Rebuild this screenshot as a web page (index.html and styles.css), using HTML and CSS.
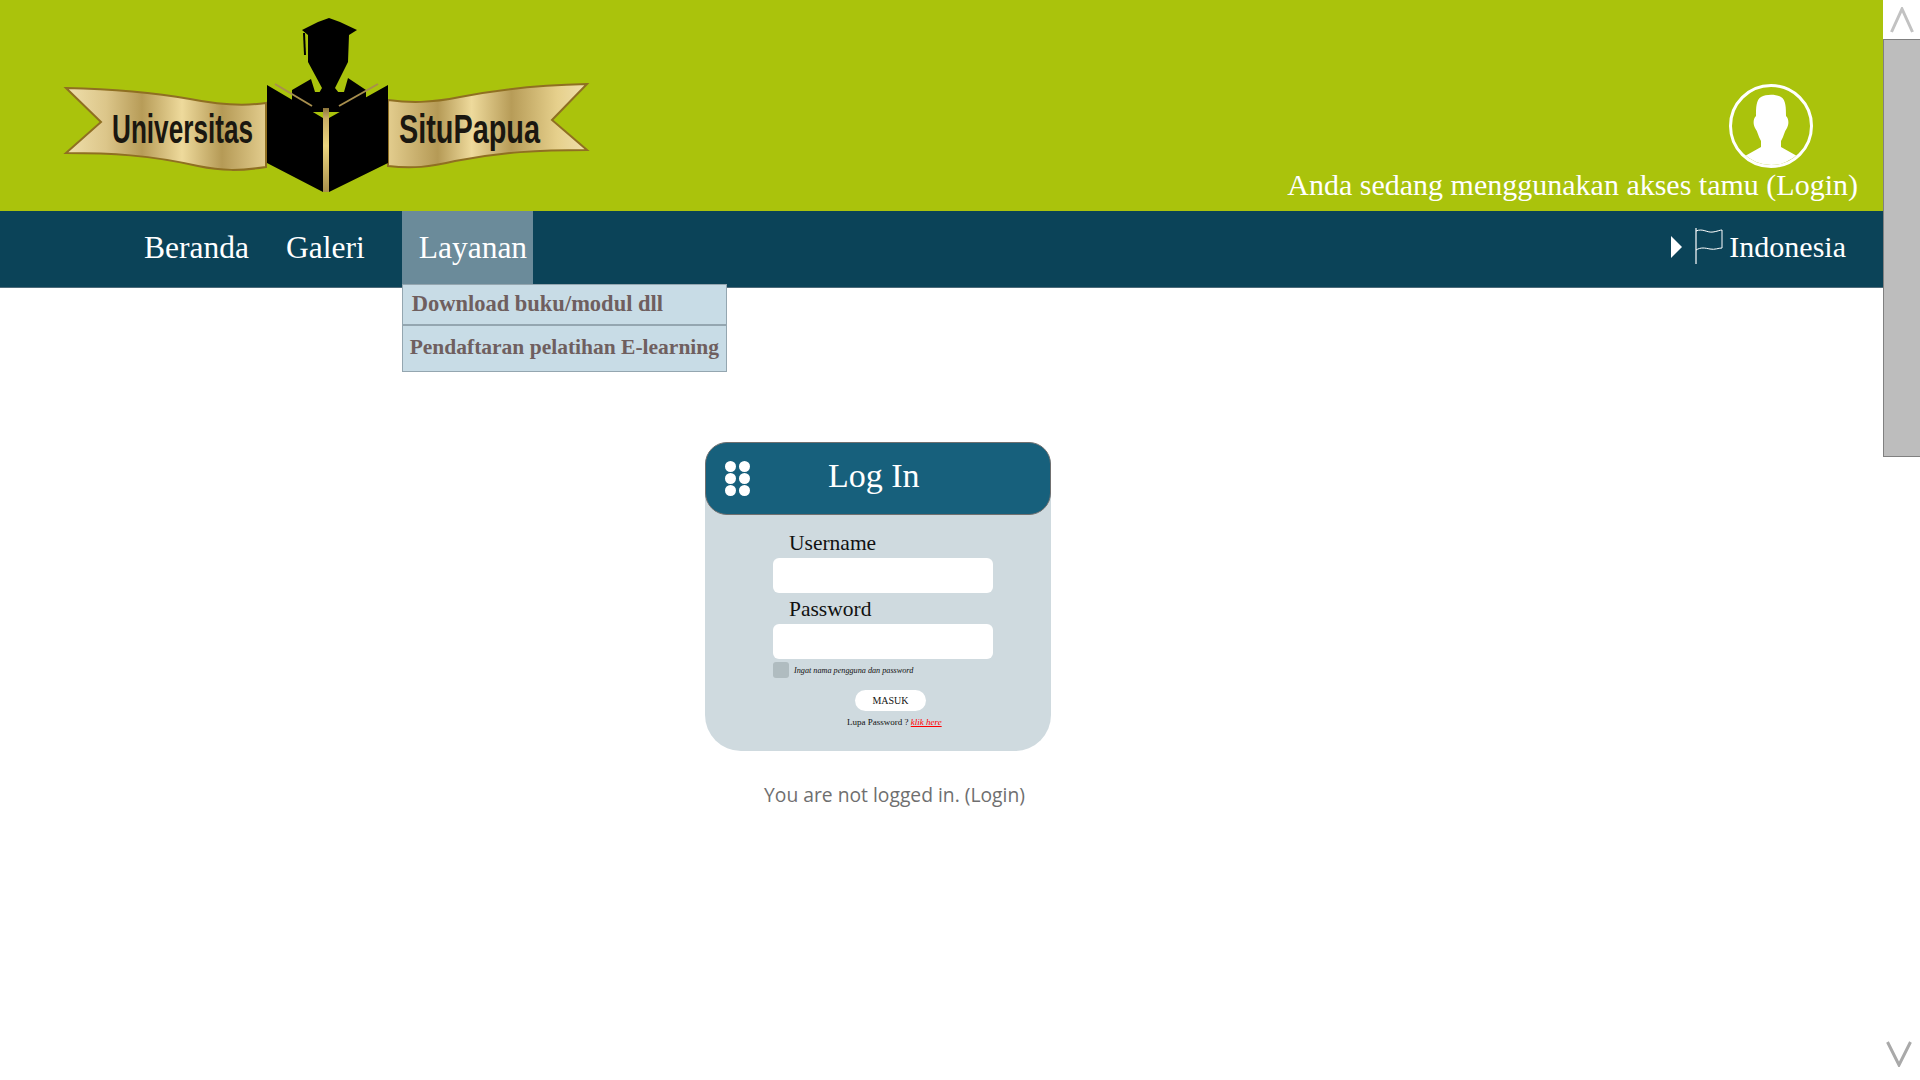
FILE: index.html
```html
<!DOCTYPE html>
<html lang="id">
<head>
  <meta charset="UTF-8">
  <meta name="viewport" content="width=device-width, initial-scale=1.0">
  <title>Universitas Situ Papua</title>
  <link rel="stylesheet" href="styles.css">
</head>
<body>
  <div id="halaman">
    <div id="utama">
      <div id="topo">
        <svg class="logo" width="600" height="200" viewBox="0 0 600 200">
          <defs>
            <linearGradient id="emas" x1="0" y1="0" x2="1" y2="0">
              <stop offset="0" stop-color="#f0e0ac"/>
              <stop offset="0.2" stop-color="#dcc68a"/>
              <stop offset="0.38" stop-color="#b79c58"/>
              <stop offset="0.58" stop-color="#eeda9c"/>
              <stop offset="0.78" stop-color="#b59a56"/>
              <stop offset="1" stop-color="#e3cd8e"/>
            </linearGradient>
            <linearGradient id="emas2" x1="0" y1="0" x2="1" y2="0">
              <stop offset="0" stop-color="#e3cd8e"/>
              <stop offset="0.25" stop-color="#b59a56"/>
              <stop offset="0.42" stop-color="#eeda9c"/>
              <stop offset="0.62" stop-color="#b79c58"/>
              <stop offset="0.85" stop-color="#e6d08c"/>
              <stop offset="1" stop-color="#f0e0ac"/>
            </linearGradient>
            <linearGradient id="garis" x1="0" y1="0" x2="0" y2="1">
              <stop offset="0" stop-color="#8a733a"/>
              <stop offset="0.12" stop-color="#c9ad64"/>
              <stop offset="0.45" stop-color="#ecd57e"/>
              <stop offset="1" stop-color="#a98f4c"/>
            </linearGradient>
          </defs>
          <!-- pita kiri -->
          <path d="M66 88 C110 89 150 92 190 99 C220 105 245 106 266 103 L266 167 C240 171 222 171 198 166 C150 155 110 153 66 153 L101 122 Z" fill="url(#emas)" stroke="#8f6f22" stroke-width="2"/>
          <!-- pita kanan -->
          <path d="M587 84 C540 85 500 89 460 97 C430 103 410 103 388 100 L388 166 C412 169 430 167 455 161 C500 152 540 150 587 150 L552 120 Z" fill="url(#emas2)" stroke="#8f6f22" stroke-width="2"/>
          <text class="logo-teks" transform="translate(112 143) scale(0.6 1)" textLength="235" lengthAdjust="spacingAndGlyphs">Universitas</text>
          <text class="logo-teks" transform="translate(399 143) scale(0.6 1)" textLength="235" lengthAdjust="spacingAndGlyphs">SituPapua</text>
          <!-- orang -->
          <path d="M329 18 L340 22 L357 30 L349 35 L348 62 L335 88 L339 93 L319 93 L322 88 L308 62 L308 35 L302 30 L318 22 Z" fill="#000"/>
          <path d="M303 33 L304 55 L306 55 L305 33 Z" fill="#000"/>
          <path d="M292 90 L311 79 L315 92 L344 92 L348 78 L366 90 L366 112 L292 112 Z" fill="#000"/>
          <!-- buku -->
          <path d="M267 85 L323 118 L329 118 L388 85 L388 163 L329 192 L323 192 L267 163 Z" fill="#000"/>
          <path d="M275 84 L312 106" stroke="#a88f4e" stroke-width="2"/>
          <path d="M378 84 L339 106" stroke="#a88f4e" stroke-width="2"/>
          <rect x="323" y="108" width="6" height="84" fill="url(#garis)"/>
        </svg>
        <div class="akun">
          <svg class="avatar" width="84" height="84" viewBox="0 0 84 84">
            <defs>
              <clipPath id="lingkar"><circle cx="42" cy="42" r="39"/></clipPath>
            </defs>
            <circle cx="42" cy="42" r="40.5" fill="none" stroke="#fff" stroke-width="3"/>
            <g clip-path="url(#lingkar)" fill="#fff">
              <path d="M32 13 C37 10 47 10 52 13 C57 16 57 24 57 32 C60 35 60 40 58 44 C55 48 55 52 52 57 L52 63 L68 72 L68 84 L16 84 L16 72 L32 63 L32 57 C29 52 29 48 26 44 C24 40 24 35 27 32 C27 24 27 16 32 13 Z"/>
            </g>
          </svg>
          <div class="akses">Anda sedang menggunakan akses tamu (Login)</div>
        </div>
      </div>

      <div id="menu">
        <div class="menu-kiri">
          <a class="menu-item">Beranda</a>
          <a class="menu-item">Galeri</a>
          <div class="menu-item aktif">
            Layanan
            <div class="dropdown">
              <a class="dd-item">Download buku/modul dll</a>
              <a class="dd-item">Pendaftaran pelatihan E-learning</a>
            </div>
          </div>
        </div>
        <div class="bahasa">
          <span class="segitiga"></span>
          <svg class="bendera" width="28" height="36" viewBox="0 0 28 36">
            <path d="M1 0 V36" stroke="#fff" stroke-width="1.2" fill="none"/>
            <path d="M1 3 C8 0 12 5 18 4 C22 3.500 25 2 27 2 V20 C23 20 20 22 15 21 C10 20 6 19 1 22" stroke="#fff" stroke-width="1" fill="none"/>
          </svg>
          <span>Indonesia</span>
        </div>
      </div>

      <div id="konten">
        <div class="kartu">
          <div class="kartu-atas">
            <div class="titik">
              <span></span><span></span>
              <span></span><span></span>
              <span></span><span></span>
            </div>
            <h1>Log In</h1>
          </div>
          <form class="form">
            <label class="label">Username</label>
            <input class="isian" type="text">
            <label class="label">Password</label>
            <input class="isian" type="password">
            <div class="ingat">
              <span class="cek"></span>
              <span>Ingat nama pengguna dan password</span>
            </div>
            <button class="masuk" type="button">MASUK</button>
            <div class="lupa">Lupa Password ? <a class="klik">klik here</a></div>
          </form>
        </div>
        <p class="pesan">You are not logged in. (Login)</p>
      </div>
    </div>

    <div id="gulir">
      <div class="gulir-atas">
        <svg width="24" height="26" viewBox="0 0 24 26"><path d="M1.500 25 L12 2 L22.500 25" fill="none" stroke="#c2c2c2" stroke-width="3"/></svg>
      </div>
      <div class="gulir-jempol"></div>
      <div class="gulir-bawah">
        <svg width="26" height="26" viewBox="0 0 26 26"><path d="M1.500 1 L13 24 L24.500 1" fill="none" stroke="#a9a9a9" stroke-width="3"/></svg>
      </div>
    </div>
  </div>
</body>
</html>
```

FILE: styles.css
```css
body {
  font-family: "Liberation Serif", "Times New Roman", serif;
  background-color: #fff;
  margin: 0;
  padding: 0;
  height: 100vh;
  overflow: hidden;
}

#halaman {
  display: flex;
  height: 100%;
}

#utama {
  flex-grow: 1;
  display: flex;
  flex-direction: column;
  min-width: 0;
}

/* bagian atas */
#topo {
  height: 211px;
  flex-shrink: 0;
  background-color: #aac30c;
  display: flex;
  justify-content: space-between;
  overflow: hidden;
}

.logo {
  display: block;
  flex-shrink: 0;
}

.logo-teks {
  font-family: "Liberation Sans", Arial, sans-serif;
  font-size: 40px;
  font-weight: bold;
  fill: #1a1710;
}

.akun {
  display: flex;
  flex-direction: column;
  align-items: flex-end;
  padding: 84px 25px 0 0;
}

.avatar {
  display: block;
  margin-right: 45px;
}

.akses {
  color: #fff;
  font-size: 30px;
  line-height: 34px;
  white-space: nowrap;
}

/* menu */
#menu {
  height: 76px;
  flex-shrink: 0;
  background-color: #0b4358;
  border-bottom: 1px solid #4e6b7a;
  display: flex;
  justify-content: space-between;
  color: #fff;
  font-size: 31.5px;
}

.menu-kiri {
  display: flex;
  padding-left: 144px;
  height: 73px;
}

.menu-item {
  display: flex;
  align-items: center;
  height: 73px;
  margin-right: 37px;
  position: relative;
}

.menu-item.aktif {
  background-color: #6b8b9a;
  padding: 0 6px 0 17px;
  margin-right: 0;
}

.dropdown {
  position: absolute;
  top: 73px;
  left: 0;
  width: 323px;
  background-color: #c8dce6;
  border: 1px solid #94a6b0;
  color: #6f5f5f;
  font-size: 21.5px;
  font-weight: bold;
  z-index: 5;
}

.dd-item {
  display: block;
  white-space: nowrap;
  height: 39px;
  line-height: 38px;
  padding-left: 9px;
  font-size: 22.5px;
}

.dd-item + .dd-item {
  border-top: 2px solid #94a6b0;
  height: 45px;
  line-height: 43px;
  padding-left: 7px;
  font-size: 21.5px;
}

.bahasa {
  display: flex;
  align-items: center;
  padding-right: 37px;
  height: 72px;
  font-size: 30px;
}

.segitiga {
  width: 0;
  height: 0;
  border-top: 11px solid transparent;
  border-bottom: 11px solid transparent;
  border-left: 11px solid #fff;
  margin-right: 13px;
}

.bendera {
  display: block;
  margin: -3px 6px 0 0;
}

/* isi halaman */
#konten {
  flex-grow: 1;
  padding: 154px 0 0 705px;
}

.kartu {
  width: 346px;
  background-color: #cfdadf;
  border-radius: 26px 26px 36px 36px;
  padding-bottom: 23px;
}

.kartu-atas {
  height: 73px;
  box-sizing: border-box;
  background-color: #17607c;
  border: 1px solid #707070;
  border-radius: 22px;
  display: flex;
  align-items: center;
  padding-left: 19px;
  color: #fff;
}

.titik {
  display: grid;
  grid-template-columns: 11px 11px;
  column-gap: 3px;
  row-gap: 1px;
}

.titik span {
  width: 11px;
  height: 11px;
  border-radius: 50%;
  background-color: #fff;
}

h1 {
  font-size: 34px;
  font-weight: normal;
  margin: -6px 0 0 78px;
}

.form {
  display: flex;
  flex-direction: column;
  width: 220px;
  margin-left: 68px;
  padding-top: 13px;
}

.label {
  font-size: 21.5px;
  line-height: 30px;
  padding-left: 16px;
  color: #111;
}

.isian {
  width: 220px;
  height: 35px;
  box-sizing: border-box;
  border: none;
  border-radius: 6px;
  background-color: #fff;
  margin-bottom: 1px;
}

.ingat {
  display: flex;
  align-items: center;
  gap: 5px;
  font-size: 8.2px;
  font-style: italic;
  color: #111;
  margin-top: 2px;
}

.cek {
  width: 16px;
  height: 16px;
  background-color: #b0bcc0;
  border-radius: 3px;
}

.masuk {
  align-self: flex-start;
  width: 71px;
  height: 21px;
  margin: 12px 0 0 82px;
  padding: 0;
  border: none;
  border-radius: 11px;
  background-color: #fff;
  font-family: inherit;
  font-size: 10px;
  color: #111;
}

.lupa {
  font-size: 9px;
  line-height: 12px;
  margin: 5px 0 0 74px;
  white-space: nowrap;
  color: #111;
}

.klik {
  color: #f00;
  font-style: italic;
  text-decoration: underline;
}

.pesan {
  font-family: "Open Sans", sans-serif;
  font-size: 19.3px;
  color: #6f6f6f;
  margin: 30px 0 0 59px;
}

/* scrollbar */
#gulir {
  width: 37px;
  flex-shrink: 0;
  display: flex;
  flex-direction: column;
  background-color: #fff;
}

.gulir-atas {
  height: 39px;
  display: flex;
  justify-content: center;
  padding-top: 7px;
  box-sizing: border-box;
}

.gulir-jempol {
  height: 418px;
  box-sizing: border-box;
  background-color: #bdbdbd;
  border: 1px solid #808080;
  border-right: none;
}

.gulir-bawah {
  flex-grow: 1;
  display: flex;
  align-items: flex-end;
  padding: 0 0 13px 3px;
}
```
